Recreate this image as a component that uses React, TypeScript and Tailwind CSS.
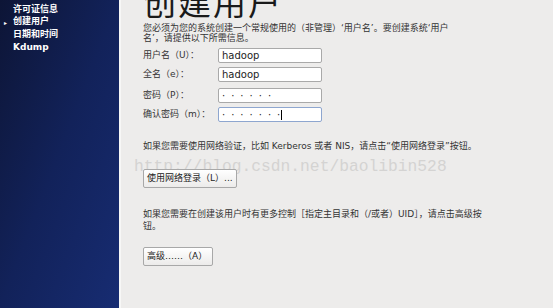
import React from 'react';

const font = { fontFamily: '"DejaVu Sans", "Noto Sans CJK SC", sans-serif' };

const steps = ['许可证信息', '创建用户', '日期和时间', 'Kdump'];

function Field({ label, value, active, secret }: { label: string; value: string; active?: boolean; secret?: boolean }) {
  return (
    <div className="flex items-center h-[19px]">
      <div className="w-[75px] text-[9px] text-[#333]">{label}</div>
      <div
        className={`w-[104px] h-[15px] bg-white border rounded-[2px] px-[3px] flex items-center text-[10px] text-[#222] ${
          active ? 'border-[#8ea6cf]' : 'border-[#a9a9a9]'
        } ${secret ? 'tracking-[6px]' : ''}`}
      >
        {value}
        {active && <span className="-ml-[5px] w-[1px] h-[10px] bg-black" />}
      </div>
    </div>
  );
}

export default function App() {
  return (
    <div className="w-[553px] h-[308px] flex overflow-hidden bg-[#edeceb]" style={font}>
      <div className="w-[119px] h-full bg-gradient-to-br from-[#0d1536] via-[#12225a] to-[#172c72] pt-[3px]">
        {steps.map((s, i) => (
          <div key={s} className="flex items-center h-[12.7px] text-[9px] font-bold text-white">
            <span className="w-[13px] pl-[4px] text-[6px]">{i === 1 ? '▸' : ''}</span>
            {s}
          </div>
        ))}
      </div>
      <div className="w-[2px] h-full bg-[#f7f7f6]" />
      <div className="flex-1 pl-[22px] relative">
        <div className="text-[33px] leading-none -mt-[13px] text-[#1a1a1a] tracking-[2px]">创建用户</div>
        <div className="mt-[3px] text-[9px] leading-[10px] text-[#333]">
          您必须为您的系统创建一个常规使用的（非管理）‘用户名’。要创建系统‘用户
          <br />
          名’，请提供以下所需信息。
        </div>
        <div className="mt-[3px] flex flex-col">
          <Field label="用户名（U）：" value="hadoop" />
          <Field label="全名（e）：" value="hadoop" />
          <div className="h-[2px]" />
          <Field label="密码（P）：" value="······" secret />
          <Field label="确认密码（m）：" value="·······" secret active />
        </div>
        <div className="mt-[16px] text-[9px] text-[#333] leading-[12px]">
          如果您需要使用网络验证，比如 Kerberos 或者 NIS，请点击“使用网络登录”按钮。
        </div>
        <div
          className="absolute left-[13px] top-[155px] text-[16.3px] text-[#d4d3d2] pointer-events-none"
          style={{ fontFamily: '"Liberation Mono", monospace' }}
        >
          http://blog.csdn.net/baolibin528
        </div>
        <button className="relative mt-[17px] h-[19px] px-[3px] border border-[#a8a8a8] rounded-[2px] bg-gradient-to-b from-white to-[#ecebea] text-[9px] text-[#222]">
          使用网络登录（L）...
        </button>
        <div className="mt-[20px] text-[9px] text-[#333] leading-[12px]">
          如果您需要在创建该用户时有更多控制［指定主目录和（/或者）UID］，请点击高级按
          <br />
          钮。
        </div>
        <button className="mt-[15px] h-[19px] w-[70px] text-left px-[3px] border border-[#a8a8a8] rounded-[2px] bg-gradient-to-b from-white to-[#ecebea] text-[9px] text-[#222]">
          高级……（A）
        </button>
      </div>
    </div>
  );
}
